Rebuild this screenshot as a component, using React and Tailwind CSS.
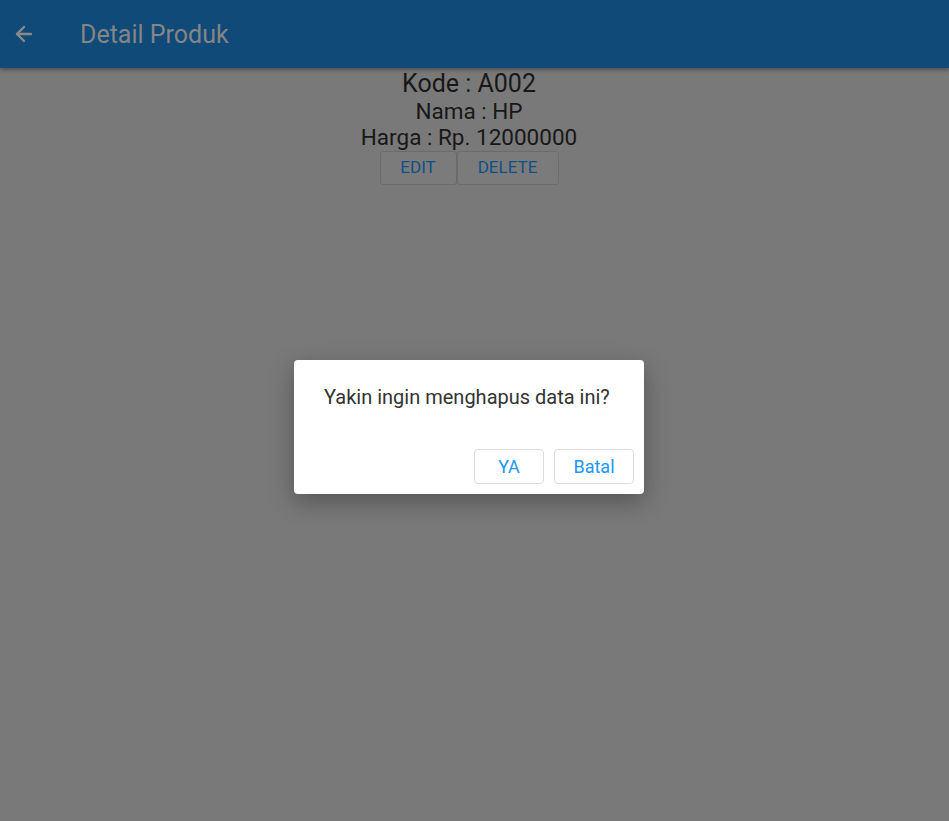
import { ArrowLeft } from "lucide-react";

export default function App() {
  return (
    <div
      className="relative min-h-screen h-[821px] overflow-hidden bg-[#797979]"
      style={{ fontFamily: "Roboto, 'Noto Sans', sans-serif" }}
    >
      {/* APP BAR */}
      <header className="h-[68px] bg-[#104a79] flex items-center shadow-[0_2px_4px_rgba(0,0,0,0.35)] relative z-10">
        <div className="w-[80px] pl-[12px] flex items-center">
          <ArrowLeft className="w-[24px] h-[24px] text-[#8a8a8a]" strokeWidth={2.4} />
        </div>
        <h1 className="text-[25px] text-[#858585] font-normal leading-none">Detail Produk</h1>
      </header>

      {/* DETAIL */}
      <main className="flex flex-col items-center pt-[1px] text-[#181818]">
        <p className="text-[25px] leading-[30px] mr-[11px]">Kode : A002</p>
        <p className="text-[22.5px] leading-[25px] mr-[11px]">Nama : HP</p>
        <p className="text-[22.5px] leading-[26px] mr-[11px]">Harga : Rp. 12000000</p>
        <div className="flex mt-[1px] mr-[11px]">
          <button className="w-[77px] h-[34px] border border-[#6b6b6b] rounded-[3px] text-[17px] font-normal text-[#0f4f86] bg-[#7b7b7b]">
            EDIT
          </button>
          <button className="w-[102px] h-[34px] border border-[#6b6b6b] rounded-[3px] text-[17px] font-normal text-[#0f4f86] bg-[#7b7b7b]">
            DELETE
          </button>
        </div>
      </main>

      {/* DIALOG */}
      <div className="absolute left-[294px] top-[360px] w-[350px] h-[134px] bg-white rounded-[4px] shadow-[0_8px_24px_rgba(0,0,0,0.3)] flex flex-col">
        <p className="text-[20px] text-[#333333] pt-[24px] pl-[30px] leading-[26px]">
          Yakin ingin menghapus data ini?
        </p>
        <div className="flex justify-end gap-[10px] pr-[10px] mt-auto mb-[10px]">
          <button className="w-[70px] h-[35px] border border-[#dddddd] rounded-[4px] text-[18px] text-[#2196f3]">
            YA
          </button>
          <button className="w-[80px] h-[35px] border border-[#dddddd] rounded-[4px] text-[18px] text-[#2196f3]">
            Batal
          </button>
        </div>
      </div>
    </div>
  );
}
